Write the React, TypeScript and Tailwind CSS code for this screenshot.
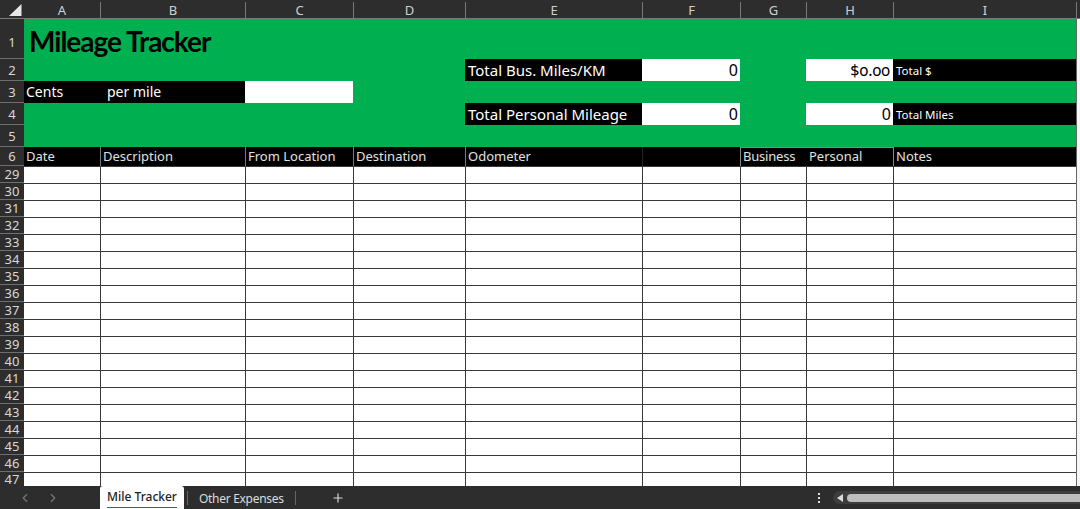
import type { FC, ReactNode } from 'react'
import { ChevronLeft, ChevronRight, Plus } from 'lucide-react'

const GRID = 'grid grid-cols-[24px_76px_145px_108px_112px_177px_98px_66px_87px_183px_4px] grid-rows-1'
const COLS = ['A', 'B', 'C', 'D', 'E', 'F', 'G', 'H', 'I']
const BODY_ROWS = Array.from({ length: 19 }, (_, i) => 29 + i)

const RowHead: FC<{ n: number; className?: string }> = ({ n, className = 'items-center pt-[1px]' }) => (
    <div className={`flex min-h-0 justify-center border-b border-[#6e6e6e] bg-[#2d2d2d] text-[13px] leading-none text-[#d8d8d8] ${className}`}>
        {n}
    </div>
)

const Gap: FC<{ span: string }> = ({ span }) => <div className={span} />

const Black: FC<{ children?: ReactNode; className?: string }> = ({ children, className = '' }) => (
    <div className={`flex items-center bg-black pl-[3px] leading-none text-white ${className}`}>{children}</div>
)

const WhiteValue: FC<{ children?: ReactNode; className?: string }> = ({ children, className = 'pr-[2px]' }) => (
    <div className={`flex items-center justify-end bg-white text-[16px] leading-none text-black ${className}`}>
        {children}
    </div>
)

const Off = () => <div className="border-l border-[#666] bg-[#f6f6f6]" />

export default function App() {
    return (
        <div className="flex h-[509px] w-[1080px] flex-col overflow-hidden bg-white font-['Noto_Sans',sans-serif]">
            <div className="min-h-0 flex-1 overflow-hidden">
                <div className={`${GRID} h-[19px] border-b border-[#7a7a7a] bg-[#2d2d2d] text-[13px] leading-none text-[#d0d0d0]`}>
                    <div className="flex items-end justify-end pb-[2px] pr-[2px]">
                        <svg width="13" height="12" viewBox="0 0 13 12">
                            <path d="M12.5 0V12H0Z" fill="#e8e8e8" />
                        </svg>
                    </div>
                    {COLS.map((c, i) => (
                        <div
                            key={c}
                            className={`mt-[2px] flex items-center justify-center ${i > 0 ? 'border-l border-[#7a7a7a]' : ''}`}>
                            {c}
                        </div>
                    ))}
                    <div className="mt-[2px] border-l border-[#7a7a7a]" />
                </div>

                <div className={`${GRID} h-[40px] bg-[#00b050]`}>
                    <RowHead n={1} className="items-end pb-[9px]" />
                    <div className="col-span-9 flex items-center pl-[5px] pt-[3px] text-[28px] font-bold leading-none tracking-[-1px] text-black font-['Lato',sans-serif]">
                        Mileage Tracker
                    </div>
                    <Off />
                </div>

                <div className={`${GRID} h-[22px] bg-[#00b050]`}>
                    <RowHead n={2} />
                    <Gap span="col-span-4" />
                    <Black className="bg-[#0d0d0d] text-[15px]">Total Bus. Miles/KM</Black>
                    <WhiteValue>0</WhiteValue>
                    <div />
                    <WhiteValue className="pr-[3px] oldstyle-nums">$0.00</WhiteValue>
                    <Black className="pt-[2px] text-[11.5px]">Total $</Black>
                    <Off />
                </div>

                <div className={`${GRID} h-[22px] bg-[#00b050]`}>
                    <RowHead n={3} />
                    <div className="col-span-2 flex items-center bg-black text-[14px] leading-none text-white">
                        <span className="w-[83px] pl-[2px]">Cents</span>
                        <span>per mile</span>
                    </div>
                    <div className="bg-white" />
                    <Gap span="col-span-6" />
                    <Off />
                </div>

                <div className={`${GRID} h-[22px] bg-[#00b050]`}>
                    <RowHead n={4} />
                    <Gap span="col-span-4" />
                    <Black className="bg-[#0d0d0d] text-[15px]">Total Personal Mileage</Black>
                    <WhiteValue>0</WhiteValue>
                    <div />
                    <WhiteValue>0</WhiteValue>
                    <Black className="pt-[2px] text-[11.5px]">Total Miles</Black>
                    <Off />
                </div>

                <div className={`${GRID} h-[22px] bg-[#00b050]`}>
                    <RowHead n={5} />
                    <Gap span="col-span-9" />
                    <Off />
                </div>

                <div className={`${GRID} h-[19px] bg-black text-[13px] leading-none text-[#e0e0e0]`}>
                    <RowHead n={6} />
                    <div className="flex items-center pl-[2px]">Date</div>
                    <div className="flex items-center border-l border-[#777] pl-[2px]">Description</div>
                    <div className="flex items-center border-l border-[#777] pl-[2px]">From Location</div>
                    <div className="flex items-center border-l border-[#777] pl-[2px]">Destination</div>
                    <div className="flex items-center border-l border-[#777] pl-[2px]">Odometer</div>
                    <div className="border-l border-[#222]" />
                    <div className="flex items-center border-l border-t border-[#888] pb-[1px] pl-[2px] tracking-[-0.2px]">Business</div>
                    <div className="flex items-center border-t border-[#888] pb-[1px] pl-[3px]">Personal</div>
                    <div className="flex items-center border-l border-[#888] pl-[2px]">Notes</div>
                    <div className="border-l border-[#666] bg-[#f6f6f6]" />
                </div>

                {BODY_ROWS.map((n) => (
                    <div key={n} className={`${GRID} ${n === 47 ? 'h-[14px]' : 'h-[17px]'}`}>
                        <RowHead n={n} className={n === 47 ? 'items-center border-b-0 pt-[1px]' : undefined} />
                        {COLS.map((c, i) => (
                            <div key={c} className={`border-t border-[#3a3a3a] ${i > 0 ? 'border-l' : ''}`} />
                        ))}
                        <Off />
                    </div>
                ))}
            </div>

            <div className="flex h-[23px] shrink-0 items-center bg-[#2d2d2d] text-[12px] text-[#dcdcdc]">
                <div className="flex w-[100px] items-center gap-[14px] pl-[18px] text-[#777]">
                    <ChevronLeft size={14} />
                    <ChevronRight size={14} />
                </div>
                <div className="flex h-full w-[84px] flex-col items-center rounded-t-[3px] bg-white pt-[2px] font-medium text-[#222]">
                    <span className="leading-[18px]">Mile Tracker</span>
                    <span className="mt-[1px] h-[1px] w-[70px] bg-[#107c41]" />
                </div>
                <span className="ml-[3px] h-[14px] w-px bg-[#666]" />
                <span className="ml-[11px] pt-[3px] tracking-[-0.3px]">Other Expenses</span>
                <span className="ml-[11px] h-[14px] w-px bg-[#666]" />
                <Plus size={14} className="ml-[35px]" />
                <div className="ml-auto flex items-center">
                    <div className="mr-[13px] flex flex-col gap-[2px]">
                        <span className="h-[2px] w-[2px] bg-[#ddd]" />
                        <span className="h-[2px] w-[2px] bg-[#ddd]" />
                        <span className="h-[2px] w-[2px] bg-[#ddd]" />
                    </div>
                    <div className="flex h-[13px] w-[247px] items-center rounded-l-full bg-[#3d3d3d] pl-[3px]">
                        <svg width="8" height="8" viewBox="0 0 8 8">
                            <path d="M7 0V8L1 4Z" fill="#dcdcdc" />
                        </svg>
                        <span className="ml-[3px] h-[8px] flex-1 rounded-l-full bg-[#bdbdbd]" />
                    </div>
                </div>
            </div>
        </div>
    )
}
